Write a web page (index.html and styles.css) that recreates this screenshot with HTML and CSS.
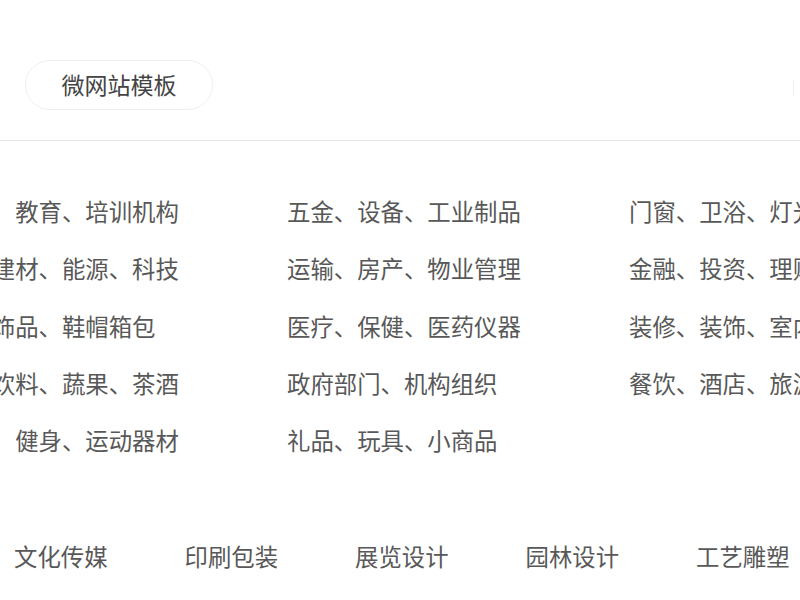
FILE: index.html
```html
<!DOCTYPE html>
<html lang="zh-CN">
<head>
<meta charset="utf-8">
<title>模板分类</title>
<link rel="stylesheet" href="styles.css">
</head>
<body>
<div class="page">
  <div class="header">
    <div class="pill">微网站模板</div>
    <div class="divider"></div>
  </div>
  <div class="cats">
    <div class="cat">学校、教育、培训机构</div>
    <div class="cat">五金、设备、工业制品</div>
    <div class="cat">门窗、卫浴、灯光照明</div>
    <div class="cat">家居建材、能源、科技</div>
    <div class="cat">运输、房产、物业管理</div>
    <div class="cat">金融、投资、理财保险</div>
    <div class="cat">服装饰品、鞋帽箱包</div>
    <div class="cat">医疗、保健、医药仪器</div>
    <div class="cat">装修、装饰、室内设计</div>
    <div class="cat">食品饮料、蔬果、茶酒</div>
    <div class="cat">政府部门、机构组织</div>
    <div class="cat">餐饮、酒店、旅游</div>
    <div class="cat">体育、健身、运动器材</div>
    <div class="cat">礼品、玩具、小商品</div>
  </div>
  <div class="tags">
    <div class="tag">文化传媒</div>
    <div class="tag">印刷包装</div>
    <div class="tag">展览设计</div>
    <div class="tag">园林设计</div>
    <div class="tag">工艺雕塑</div>
  </div>
</div>
</body>
</html>
```
FILE: styles.css
```css
html, body {
  margin: 0;
  padding: 0;
  background: #fff;
}
body {
  width: 800px;
  height: 600px;
  overflow: hidden;
  font-family: "Noto Sans CJK SC", "Microsoft YaHei", sans-serif;
  color: #585858;
}
.page {
  width: 800px;
}
.header {
  height: 141px;
  border-bottom: 1px solid #e4e4e4;
  display: flex;
  align-items: flex-start;
  justify-content: space-between;
  padding-top: 60px;
  box-sizing: border-box;
}
.pill {
  margin-left: 25px;
  width: 188px;
  height: 50px;
  box-sizing: border-box;
  border: 1px solid #efefef;
  border-radius: 25px;
  font-size: 23px;
  line-height: 46px;
  text-align: center;
  color: #444;
}
.divider {
  width: 1px;
  height: 16px;
  margin-top: 20px;
  margin-right: 6px;
  background: #f0f0f0;
}
.cats {
  display: grid;
  grid-template-columns: repeat(3, 342px);
  grid-auto-rows: 57.3px;
  margin-left: -55px;
  padding-top: 42px;
  width: 1100px;
}
.cat {
  font-size: 23.4px;
  line-height: 57.3px;
  white-space: nowrap;
}
.tags {
  display: flex;
  margin-top: 59px;
}
.tag {
  width: 170.5px;
  flex: none;
  box-sizing: border-box;
  padding-left: 14px;
  font-size: 23.4px;
  line-height: 57px;
  white-space: nowrap;
}
```
